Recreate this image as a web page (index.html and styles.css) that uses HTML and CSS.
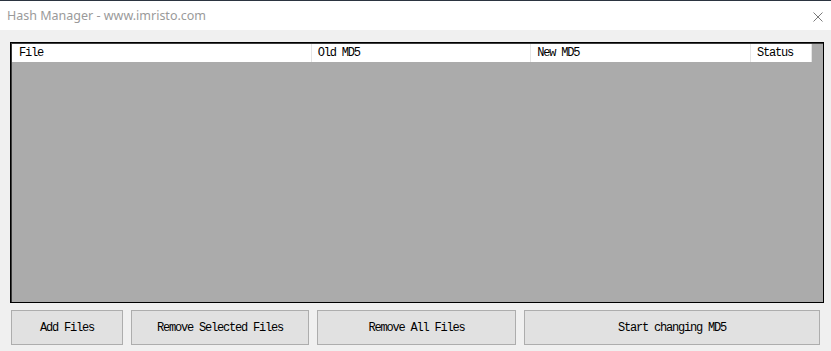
FILE: index.html
```html
<!DOCTYPE html>
<html>
<head>
<meta charset="utf-8">
<link rel="stylesheet" href="styles.css">
</head>
<body>
<div class="window">
  <div class="titlebar">
    <span class="title">Hash Manager - www.imristo.com</span>
    <svg class="close" width="10" height="10" viewBox="0 0 10 10"><path d="M0.5 0.5 L9.5 9.5 M9.5 0.5 L0.5 9.5" stroke="#7a7a7a" stroke-width="1" fill="none"/></svg>
  </div>
  <div class="client">
    <div class="list">
      <div class="header">
        <div class="col c-file">File</div>
        <div class="col c-old">Old MD5</div>
        <div class="col c-new">New MD5</div>
        <div class="col c-status">Status</div>
      </div>
    </div>
    <div class="buttons">
      <button class="btn b-add">Add Files</button>
      <button class="btn b-sel">Remove Selected Files</button>
      <button class="btn b-all">Remove All Files</button>
      <button class="btn b-start">Start changing MD5</button>
    </div>
  </div>
</div>
</body>
</html>
```
FILE: styles.css
```css
html, body {
  margin: 0;
  padding: 0;
  background: #f0f0f0;
}
.window {
  width: 831px;
  height: 351px;
  display: flex;
  flex-direction: column;
  background: #f0f0f0;
  overflow: hidden;
}
.titlebar {
  height: 29px;
  border-top: 1px solid #2b3440;
  background: #ffffff;
  display: flex;
  align-items: center;
  justify-content: space-between;
  padding: 0 8px 0 7px;
}
.title {
  font-family: "Noto Sans", sans-serif;
  font-size: 12.5px;
  color: #9a9a9a;
  margin-top: -1px;
}
.close {
  margin-right: 0;
  margin-top: 2px;
}
.client {
  padding: 12px 0 0 10px;
  display: flex;
  flex-direction: column;
}
.list {
  width: 811px;
  height: 258px;
  border: 1px solid #000;
  border-left-color: #000;
  box-shadow: inset 1px 1px 0 #3c3c3c;
  padding: 1px 0 0 1px;
  background: #ababab;
}
.header {
  display: flex;
  height: 18px;
  width: 800px;
  background: #fff;
}
.col {
  font-family: "Liberation Mono", monospace;
  font-size: 12px;
  letter-spacing: -1.2px;
  color: #000;
  line-height: 18px;
  box-sizing: border-box;
  padding-left: 7px;
  border-right: 1px solid #e5e5e5;
  white-space: nowrap;
}
.c-file { width: 300px; }
.c-old { width: 220px; padding-left: 6px; }
.c-new { width: 220px; padding-left: 6px; }
.c-status { width: 61px; padding-left: 6px; }
.buttons {
  display: flex;
  gap: 8px;
  margin-top: 7px;
  padding-left: 1px;
}
.btn {
  height: 35px;
  box-sizing: border-box;
  background: #e1e1e1;
  border: 1px solid #adadad;
  font-family: "Liberation Mono", monospace;
  font-size: 12px;
  letter-spacing: -1.2px;
  color: #000;
  padding: 0;
  margin: 0;
}
.b-add { width: 112px; }
.b-sel { width: 178px; }
.b-all { width: 199px; }
.b-start { width: 296px; }
```
